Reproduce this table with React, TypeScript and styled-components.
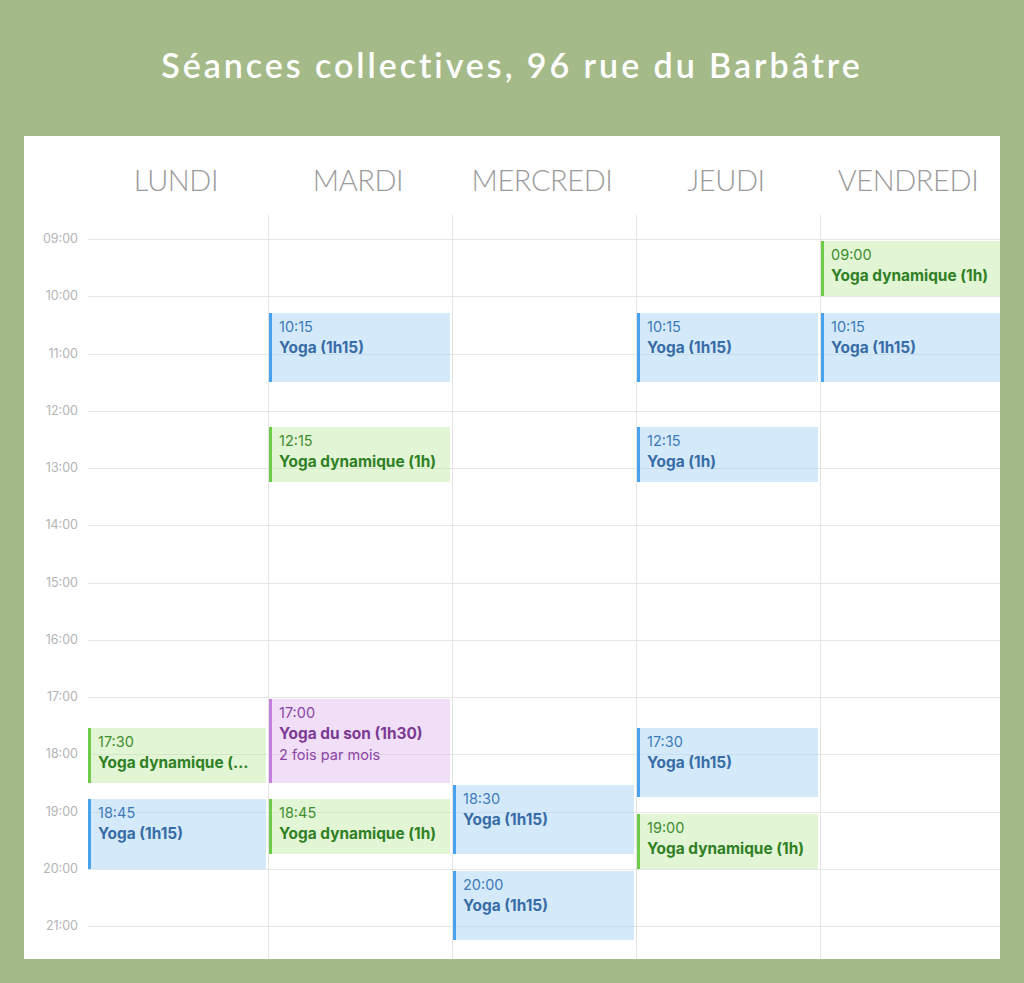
import React from "react";
import styled, { createGlobalStyle, css } from "styled-components";

const HOUR = 57.25;
const FIRST_HOUR = 9;
const TOP_PAD = 24;
const BODY_HEIGHT = TOP_PAD + 12 * HOUR + 33;
const COLS = "180px 184px 184px 184px 180px";

type Tone = "blue" | "green" | "purple";

interface Session {
  start: string;
  hours: number;
  title: string;
  note?: string;
  tone: Tone;
}

interface Day {
  name: string;
  sessions: Session[];
}

const days: Day[] = [
  {
    name: "LUNDI",
    sessions: [
      { start: "17:30", hours: 1, title: "Yoga dynamique (1h)", tone: "green" },
      { start: "18:45", hours: 1.25, title: "Yoga (1h15)", tone: "blue" },
    ],
  },
  {
    name: "MARDI",
    sessions: [
      { start: "10:15", hours: 1.25, title: "Yoga (1h15)", tone: "blue" },
      { start: "12:15", hours: 1, title: "Yoga dynamique (1h)", tone: "green" },
      { start: "17:00", hours: 1.5, title: "Yoga du son (1h30)", note: "2 fois par mois", tone: "purple" },
      { start: "18:45", hours: 1, title: "Yoga dynamique (1h)", tone: "green" },
    ],
  },
  {
    name: "MERCREDI",
    sessions: [
      { start: "18:30", hours: 1.25, title: "Yoga (1h15)", tone: "blue" },
      { start: "20:00", hours: 1.25, title: "Yoga (1h15)", tone: "blue" },
    ],
  },
  {
    name: "JEUDI",
    sessions: [
      { start: "10:15", hours: 1.25, title: "Yoga (1h15)", tone: "blue" },
      { start: "12:15", hours: 1, title: "Yoga (1h)", tone: "blue" },
      { start: "17:30", hours: 1.25, title: "Yoga (1h15)", tone: "blue" },
      { start: "19:00", hours: 1, title: "Yoga dynamique (1h)", tone: "green" },
    ],
  },
  {
    name: "VENDREDI",
    sessions: [
      { start: "09:00", hours: 1, title: "Yoga dynamique (1h)", tone: "green" },
      { start: "10:15", hours: 1.25, title: "Yoga (1h15)", tone: "blue" },
    ],
  },
];

const hours = ["09:00", "10:00", "11:00", "12:00", "13:00", "14:00", "15:00", "16:00", "17:00", "18:00", "19:00", "20:00", "21:00"];

const tones = {
  blue: { bg: "rgba(170, 214, 245, 0.5)", bar: "#48a2ee", time: "#3f7bb8", title: "#386ca6" },
  green: { bg: "rgba(190, 232, 162, 0.45)", bar: "#6fcb4a", time: "#3e8d2e", title: "#2f8024" },
  purple: { bg: "rgba(222, 184, 236, 0.45)", bar: "#c27fdc", time: "#8c46a4", title: "#7c3a94" },
};

const GlobalStyle = createGlobalStyle`
  body {
    margin: 0;
    background: #a5ba89;
  }
`;

const Page = styled.div`
  width: 1024px;
  min-height: 983px;
  padding: 0 24px 24px;
  box-sizing: border-box;
`;

const Title = styled.h1`
  margin: 0;
  height: 136px;
  padding-bottom: 8px;
  box-sizing: border-box;
  display: flex;
  align-items: center;
  justify-content: center;
  font-family: Lato, "Noto Sans", sans-serif;
  font-weight: 600;
  font-size: 34px;
  letter-spacing: 2.95px;
  color: #ffffff;
`;

const Panel = styled.div`
  width: 976px;
  background: #ffffff;
`;

const HeaderRow = styled.div`
  display: grid;
  grid-template-columns: 62px ${COLS};
  height: 79px;
  padding-top: 8px;
  box-sizing: border-box;
`;

const DayName = styled.div`
  display: flex;
  align-items: center;
  justify-content: center;
  font-family: Lato, "Noto Sans", sans-serif;
  font-weight: 300;
  font-size: 29px;
  letter-spacing: -0.4px;
  color: #9b9b9b;
`;

const Body = styled.div`
  display: grid;
  grid-template-columns: 64px 1fr;
  grid-template-rows: ${BODY_HEIGHT}px;
  height: ${BODY_HEIGHT}px;
`;

const Gutter = styled.div`
  display: flex;
  flex-direction: column;
  padding-top: ${TOP_PAD - 8}px;
  overflow: hidden;
`;

const HourLabel = styled.div`
  height: ${HOUR}px;
  flex-shrink: 0;
  line-height: 16px;
  padding-right: 10px;
  text-align: right;
  font-family: Inter, "Liberation Sans", sans-serif;
  font-size: 12.5px;
  color: #b4b4b4;
`;

const Days = styled.div`
  display: grid;
  grid-template-columns: ${COLS};
  background-image: repeating-linear-gradient(
    to bottom,
    #e6e6e6 0,
    #e6e6e6 1px,
    transparent 1px,
    transparent ${HOUR}px
  );
  background-position: -2px ${TOP_PAD}px;
  background-size: calc(100% + 2px) ${13 * HOUR}px;
  background-repeat: no-repeat;
`;

const DayColumn = styled.div<{ $first?: boolean }>`
  position: relative;
  ${(p) =>
    !p.$first &&
    css`
      border-left: 1px solid #e4e4e4;
    `}
`;

const Event = styled.div<{ $tone: Tone; $last?: boolean }>`
  position: absolute;
  left: 0;
  right: ${(p) => (p.$last ? 0 : 2)}px;
  box-sizing: border-box;
  padding: 3px ${(p) => (p.$last ? 8 : 11.5)}px 0 7px;
  overflow: hidden;
  background: ${(p) => tones[p.$tone].bg};
  border-left: 3px solid ${(p) => tones[p.$tone].bar};
  font-family: Inter, "Liberation Sans", sans-serif;
  line-height: 21px;
`;

const Line = styled.div`
  white-space: nowrap;
  overflow: hidden;
  text-overflow: ellipsis;
`;

const Time = styled(Line)<{ $tone: Tone }>`
  font-size: 14.5px;
  color: ${(p) => tones[p.$tone].time};
`;

const Name = styled(Line)<{ $tone: Tone }>`
  font-size: 15.4px;
  font-weight: 700;
  color: ${(p) => tones[p.$tone].title};
`;

const Note = styled(Line)<{ $tone: Tone }>`
  font-size: 14.5px;
  color: ${(p) => tones[p.$tone].time};
`;

const toHours = (t: string) => {
  const [h, m] = t.split(":").map(Number);
  return h + m / 60;
};

export default function App() {
  return (
    <>
      <GlobalStyle />
      <Page>
        <Title>Séances collectives, 96 rue du Barbâtre</Title>
        <Panel>
          <HeaderRow>
            <div />
            {days.map((d) => (
              <DayName key={d.name}>{d.name}</DayName>
            ))}
          </HeaderRow>
          <Body>
            <Gutter>
              {hours.map((h) => (
                <HourLabel key={h}>{h}</HourLabel>
              ))}
            </Gutter>
            <Days>
              {days.map((d, i) => (
                <DayColumn key={d.name} $first={i === 0}>
                  {d.sessions.map((s) => (
                    <Event
                      key={s.start}
                      $tone={s.tone}
                      $last={i === days.length - 1}
                      style={{
                        top: TOP_PAD + (toHours(s.start) - FIRST_HOUR) * HOUR + 2,
                        height: s.hours * HOUR - 2,
                      }}
                    >
                      <Time $tone={s.tone}>{s.start}</Time>
                      <Name $tone={s.tone}>{s.title}</Name>
                      {s.note && <Note $tone={s.tone}>{s.note}</Note>}
                    </Event>
                  ))}
                </DayColumn>
              ))}
            </Days>
          </Body>
        </Panel>
      </Page>
    </>
  );
}
